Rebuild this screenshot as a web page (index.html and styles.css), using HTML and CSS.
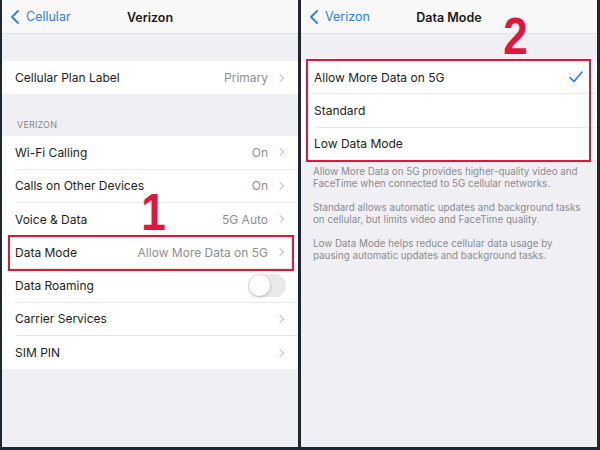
FILE: index.html
```html
<!DOCTYPE html>
<html lang="en">
<head>
  <meta charset="UTF-8">
  <title>Verizon Data Mode</title>
  <link rel="stylesheet" href="styles.css">
</head>
<body>

<div class="frame">

  <!-- Left screen: Verizon settings -->
  <section class="screen">
    <header class="nav">
      <span class="back">
        <svg class="back-icon" viewBox="0 0 8 14"><path d="M7 1L1 7l6 6"/></svg>
        Cellular
      </span>
      <span class="title">Verizon</span>
    </header>

    <div class="spacer"></div>
    <ul class="group">
      <li class="row"><span class="label">Cellular Plan Label</span><span class="value">Primary</span><span class="chev"></span></li>
    </ul>

    <div class="group-title">VERIZON</div>
    <ul class="group">
      <li class="row"><span class="label">Wi-Fi Calling</span><span class="value">On</span><span class="chev"></span></li>
      <li class="row"><span class="label">Calls on Other Devices</span><span class="value">On</span><span class="chev"></span></li>
      <li class="row"><span class="label">Voice &amp; Data</span><span class="value">5G Auto</span><span class="chev"></span></li>
      <li class="row marked">
        <span class="label">Data Mode</span><span class="value">Allow More Data on 5G</span><span class="chev"></span>
        <span class="mark mark-row"></span>
        <span class="step step-1">1</span>
      </li>
      <li class="row"><span class="label">Data Roaming</span><span class="toggle"></span></li>
      <li class="row"><span class="label">Carrier Services</span><span class="chev"></span></li>
      <li class="row"><span class="label">SIM PIN</span><span class="chev"></span></li>
    </ul>
  </section>

  <!-- Right screen: Data Mode options -->
  <section class="screen">
    <header class="nav">
      <span class="back">
        <svg class="back-icon" viewBox="0 0 8 14"><path d="M7 1L1 7l6 6"/></svg>
        Verizon
      </span>
      <span class="title">Data Mode</span>
      <span class="step step-2">2</span>
    </header>

    <div class="spacer"></div>
    <ul class="group options">
      <li class="row"><span class="label">Allow More Data on 5G</span>
        <svg class="check" viewBox="0 0 14 12"><path d="M1 6.5l4 4L13 1"/></svg>
      </li>
      <li class="row"><span class="label">Standard</span></li>
      <li class="row"><span class="label">Low Data Mode</span></li>
      <span class="mark mark-group"></span>
    </ul>

    <div class="footnote">
      <p>Allow More Data on 5G provides higher-quality video and FaceTime when connected to 5G cellular networks.</p>
      <p>Standard allows automatic updates and background tasks on cellular, but limits video and FaceTime quality.</p>
      <p>Low Data Mode helps reduce cellular data usage by pausing automatic updates and background tasks.</p>
    </div>
  </section>

</div>

</body>
</html>
```

FILE: styles.css
```css
/* General */
body {
  margin: 0;
  font-family: 'Inter', 'Noto Sans', sans-serif;
  background-color: #1d2631;
}

.frame {
  display: flex;
  gap: 3px;
  height: 447px;
  padding: 0 3px 3px 2px;
}

.screen {
  flex: 1;
  position: relative;
  background-color: #f0f0f4;
  overflow: hidden;
}

/* Navigation bar */
.nav {
  position: relative;
  height: 34px;
  display: flex;
  align-items: center;
  justify-content: center;
  background-color: #f8f8f9;
  border-bottom: 1px solid #e0e0e3;
  box-sizing: border-box;
}

.back {
  position: absolute;
  left: 9px;
  top: 10px;
  display: flex;
  align-items: center;
  gap: 7px;
  color: #2f7cf0;
  font-size: 12.5px;
  line-height: 14px;
}

.back-icon {
  width: 8px;
  height: 14px;
  fill: none;
  stroke: #2f7cf0;
  stroke-width: 1.8;
  stroke-linecap: round;
  stroke-linejoin: round;
}

.title {
  font-size: 12.5px;
  font-weight: 600;
  color: #1a1a1a;
  margin-top: 1px;
}

.spacer {
  height: 27px;
}

/* Grouped list */
.group {
  position: relative;
  list-style: none;
  margin: 0;
  padding: 0 0 0 13px;
  background-color: #ffffff;
}

.row {
  position: relative;
  height: 33.3px;
  display: flex;
  align-items: center;
  padding-right: 13px;
  font-size: 12px;
  color: #1c1c1e;
  border-bottom: 1px solid #e8e8ea;
  box-sizing: border-box;
}

.row:last-child {
  border-bottom: none;
}

.label {
  flex: 1;
}

.value {
  color: #8e8e93;
  margin-right: 9px;
}

.chev {
  width: 5px;
  height: 5px;
  border-right: 1.3px solid #c2c2c6;
  border-top: 1.3px solid #c2c2c6;
  transform: rotate(45deg);
  margin-right: 2px;
}

.group-title {
  height: 42px;
  box-sizing: border-box;
  padding: 25px 0 0 15px;
  font-size: 9px;
  color: #85858a;
  letter-spacing: 0.02em;
}

/* Switch, off state */
.toggle {
  position: relative;
  width: 38px;
  height: 23px;
  border-radius: 12px;
  background-color: #e9e9eb;
  margin-right: -1px;
}

.toggle::after {
  content: "";
  position: absolute;
  left: 1px;
  top: 1px;
  width: 21px;
  height: 21px;
  border-radius: 50%;
  background-color: #ffffff;
  box-shadow: 0 1px 3px rgba(0, 0, 0, 0.25);
}

.check {
  width: 14px;
  height: 12px;
  fill: none;
  stroke: #1f7bf2;
  stroke-width: 1.6;
  stroke-linecap: round;
  stroke-linejoin: round;
  margin-right: 1px;
}

/* Annotation overlays */
.mark {
  position: absolute;
  border: 2px solid #e0163d;
  pointer-events: none;
}

.mark-row {
  top: -1px;
  bottom: -3px;
  left: -7px;
  right: 4px;
}

.mark-group {
  top: -2px;
  bottom: -1px;
  left: 5px;
  right: 6px;
}

.step {
  position: absolute;
  font-family: 'Liberation Sans', Arial, sans-serif;
  font-weight: 700;
  font-size: 52px;
  line-height: 1;
  color: #df163d;
  transform: scaleX(0.85);
}

.step-1 {
  left: 124px;
  top: -50px;
}

.step-2 {
  left: 200px;
  top: 10px;
}

/* Footer text */
.footnote {
  padding: 5px 12px 0 12px;
  font-size: 9.8px;
  line-height: 12.3px;
  color: #8a8a8f;
}

.footnote p {
  margin: 0 0 11.5px 0;
}
```
